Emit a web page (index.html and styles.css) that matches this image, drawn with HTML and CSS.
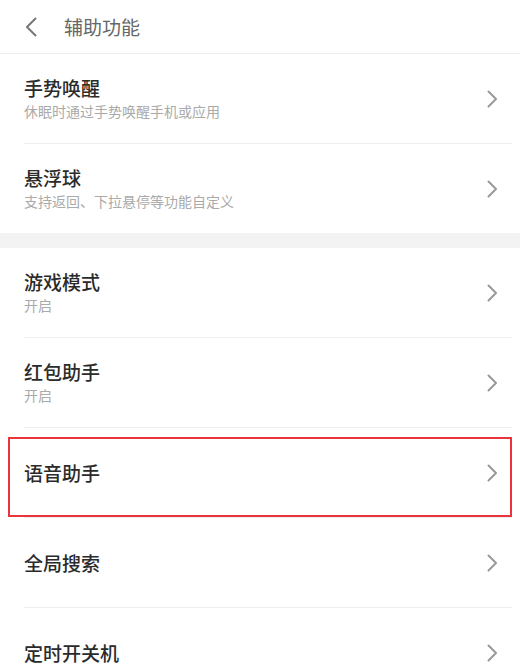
FILE: index.html
```html
<!DOCTYPE html>
<html lang="zh-CN">
<head>
    <meta charset="UTF-8">
    <meta name="viewport" content="width=device-width, initial-scale=1.0">
    <title>辅助功能</title>
    <link rel="stylesheet" href="styles.css">
</head>
<body>

    <div class="header">
        <svg class="back" width="12" height="20" viewBox="0 0 12 20"><path d="M10.5 1.5 L2 10 L10.5 18.5" fill="none" stroke="#777" stroke-width="2" stroke-linecap="round" stroke-linejoin="round"/></svg>
        <span class="header-title">辅助功能</span>
    </div>

    <div class="group">
        <div class="item">
            <div class="item-body">
                <div class="text">
                    <div class="title">手势唤醒</div>
                    <div class="sub">休眠时通过手势唤醒手机或应用</div>
                </div>
                <svg class="arrow" width="11" height="18" viewBox="0 0 11 18"><path d="M1.5 1.5 L9 9 L1.5 16.5" fill="none" stroke="#999" stroke-width="2" stroke-linecap="round" stroke-linejoin="round"/></svg>
            </div>
        </div>
        <div class="item">
            <div class="item-body">
                <div class="text">
                    <div class="title">悬浮球</div>
                    <div class="sub">支持返回、下拉悬停等功能自定义</div>
                </div>
                <svg class="arrow" width="11" height="18" viewBox="0 0 11 18"><path d="M1.5 1.5 L9 9 L1.5 16.5" fill="none" stroke="#999" stroke-width="2" stroke-linecap="round" stroke-linejoin="round"/></svg>
            </div>
        </div>
    </div>

    <div class="gap"></div>

    <div class="group">
        <div class="item">
            <div class="item-body">
                <div class="text">
                    <div class="title">游戏模式</div>
                    <div class="sub">开启</div>
                </div>
                <svg class="arrow" width="11" height="18" viewBox="0 0 11 18"><path d="M1.5 1.5 L9 9 L1.5 16.5" fill="none" stroke="#999" stroke-width="2" stroke-linecap="round" stroke-linejoin="round"/></svg>
            </div>
        </div>
        <div class="item">
            <div class="item-body">
                <div class="text">
                    <div class="title">红包助手</div>
                    <div class="sub">开启</div>
                </div>
                <svg class="arrow" width="11" height="18" viewBox="0 0 11 18"><path d="M1.5 1.5 L9 9 L1.5 16.5" fill="none" stroke="#999" stroke-width="2" stroke-linecap="round" stroke-linejoin="round"/></svg>
            </div>
        </div>
        <div class="item">
            <div class="item-body">
                <div class="text">
                    <div class="title">语音助手</div>
                </div>
                <svg class="arrow" width="11" height="18" viewBox="0 0 11 18"><path d="M1.5 1.5 L9 9 L1.5 16.5" fill="none" stroke="#999" stroke-width="2" stroke-linecap="round" stroke-linejoin="round"/></svg>
            </div>
            <div class="highlight"></div>
        </div>
        <div class="item">
            <div class="item-body">
                <div class="text">
                    <div class="title">全局搜索</div>
                </div>
                <svg class="arrow" width="11" height="18" viewBox="0 0 11 18"><path d="M1.5 1.5 L9 9 L1.5 16.5" fill="none" stroke="#999" stroke-width="2" stroke-linecap="round" stroke-linejoin="round"/></svg>
            </div>
        </div>
        <div class="item">
            <div class="item-body">
                <div class="text">
                    <div class="title">定时开关机</div>
                </div>
                <svg class="arrow" width="11" height="18" viewBox="0 0 11 18"><path d="M1.5 1.5 L9 9 L1.5 16.5" fill="none" stroke="#999" stroke-width="2" stroke-linecap="round" stroke-linejoin="round"/></svg>
            </div>
        </div>
    </div>

</body>
</html>
```

FILE: styles.css
```css
body {
    margin: 0;
    background: #fff;
    font-family: "Noto Sans CJK SC", "Noto Sans", sans-serif;
    color: #333;
}
.header {
    height: 53px;
    display: flex;
    align-items: center;
    padding-left: 25px;
    border-bottom: 1px solid #eee;
}
.back {
    display: block;
}
.header-title {
    margin-left: 27px;
    font-size: 19px;
    color: #666;
    line-height: 24px;
}
.item {
    position: relative;
    padding-left: 24px;
    padding-right: 8px;
}
.item-body {
    height: 89px;
    display: flex;
    align-items: center;
    justify-content: space-between;
    padding-right: 14px;
    border-bottom: 1px solid #eee;
}
.group .item:last-child .item-body {
    border-bottom: none;
}
.title {
    font-size: 19px;
    line-height: 24px;
    font-weight: 500;
    color: #2b2b2b;
}
.sub {
    font-size: 14px;
    line-height: 20px;
    color: #aaa;
    margin-top: 1px;
}
.arrow {
    display: block;
}
.gap {
    height: 15px;
    background: #f3f3f3;
}
.highlight {
    position: absolute;
    top: 9px;
    left: 8px;
    right: 8px;
    bottom: 1px;
    border: 2px solid #e8343a;
}
```
